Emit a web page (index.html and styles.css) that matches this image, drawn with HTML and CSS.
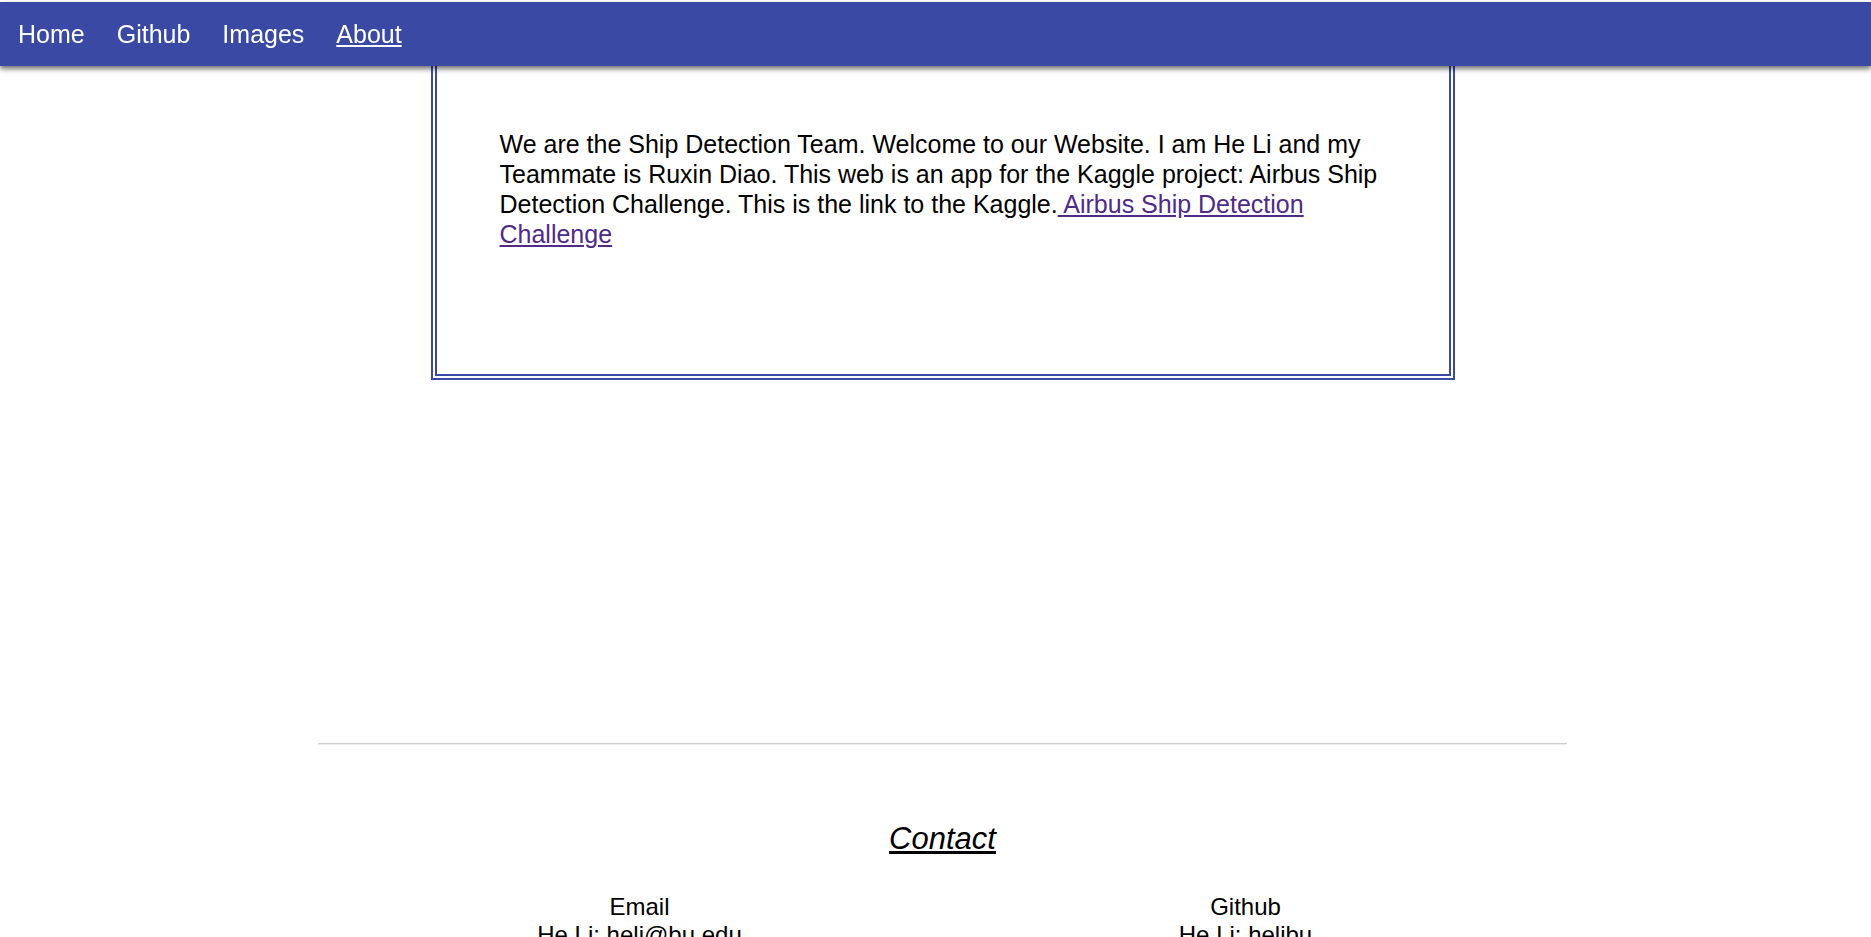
FILE: index.html
```html
<!DOCTYPE html>
<html lang="en">
<head>
<meta charset="utf-8">
<title>Ship Detection - About</title>
<link rel="stylesheet" href="styles.css">
</head>
<body>
<nav class="topnav">
  <a class="nav-link" href="#">Home</a>
  <a class="nav-link" href="#">Github</a>
  <a class="nav-link" href="#">Images</a>
  <a class="nav-link active" href="#">About</a>
</nav>
<div class="page">
  <section class="about-box">
    <p class="about-text">We are the Ship Detection Team. Welcome to our Website. I am He Li and my Teammate is Ruxin Diao. This web is an app for the Kaggle project: Airbus Ship Detection Challenge. This is the link to the Kaggle.<a class="kaggle-link" href="#"> Airbus Ship Detection Challenge</a></p>
  </section>
  <hr class="divider">
  <footer class="contact">
    <h2 class="contact-title">Contact</h2>
    <div class="contact-cols">
      <div class="contact-col">
        <div>Email</div>
        <div>He Li: heli@bu.edu</div>
      </div>
      <div class="contact-col">
        <div>Github</div>
        <div>He Li: helibu</div>
      </div>
    </div>
  </footer>
</div>
</body>
</html>
```

FILE: styles.css
```css
html, body {
  margin: 0;
  padding: 0;
  background: #ffffff;
}

body {
  font-family: "Liberation Sans", Arial, sans-serif;
  color: #000000;
  overflow: hidden;
}

.topnav {
  position: fixed;
  top: 2px;
  left: 0;
  right: 0;
  height: 64px;
  padding-left: 2px;
  background: #3a4aa4;
  display: flex;
  align-items: center;
  box-shadow: 0 3px 5px rgba(0, 0, 0, 0.55);
  z-index: 10;
}

.nav-link {
  color: #ffffff;
  text-decoration: none;
  font-size: 25px;
  padding: 0 16px;
  line-height: 29px;
}

.nav-link.active {
  text-decoration: underline;
}

.page {
  padding-left: 14px;
  display: flex;
  flex-direction: column;
  align-items: center;
}

.about-box {
  box-sizing: border-box;
  width: 1024px;
  height: 340px;
  margin-top: 40px;
  border: 6px double #3a4aa4;
  padding: 83px 60px 0 63px;
}

.about-text {
  margin: 0;
  font-size: 25px;
  line-height: 30px;
}

.kaggle-link {
  color: #4f2a8a;
  text-decoration: underline;
}

.divider {
  box-sizing: border-box;
  width: 1249px;
  height: 2px;
  margin: 363px 0 0 0;
  border: none;
  border-top: 1px solid #cfcfcf;
  border-bottom: 1px solid #ececec;
}

.contact {
  display: flex;
  flex-direction: column;
  align-items: center;
}

.contact-title {
  margin: 76px 0 0 0;
  font-size: 31px;
  font-weight: normal;
  font-style: italic;
  text-decoration: underline;
  line-height: 36px;
}

.contact-cols {
  margin-top: 36px;
  display: grid;
  grid-template-columns: 606px 606px;
}

.contact-col {
  text-align: center;
  font-size: 24px;
  line-height: 28px;
}
```
